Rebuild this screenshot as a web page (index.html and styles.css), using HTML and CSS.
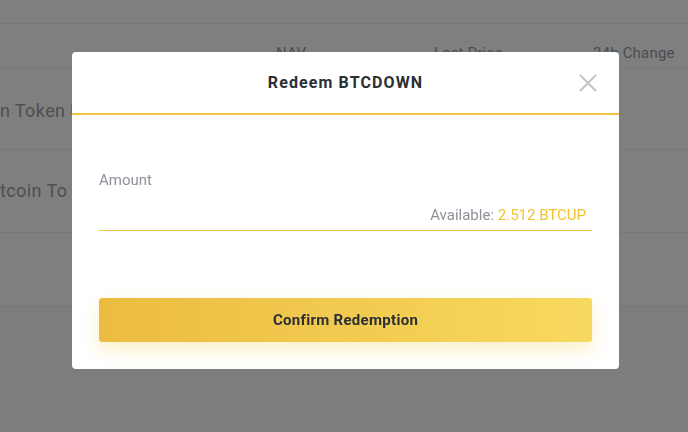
FILE: index.html
```html
<!DOCTYPE html>
<html lang="en">
<head>
    <meta charset="UTF-8">
    <meta name="viewport" content="width=device-width, initial-scale=1.0">
    <title>Redeem BTCDOWN</title>
    <link rel="stylesheet" href="styles.css">
</head>
<body>
    <div class="page">
        <div class="top-bar"></div>
        <div class="table-row table-head">
            <span class="cell name"></span>
            <span class="cell">NAV</span>
            <span class="cell">Last Price</span>
            <span class="cell">24h Change</span>
        </div>
        <div class="table-row token-row first">
            <span class="cell name">n Token U</span>
        </div>
        <div class="table-row token-row second">
            <span class="cell name">tcoin To</span>
        </div>
        <div class="table-row empty-row"></div>
        <div class="page-footer"></div>
    </div>

    <div class="overlay">
        <div class="modal">
            <div class="modal-header">
                <span></span>
                <h2 class="modal-title">Redeem BTCDOWN</h2>
                <button type="button" class="close-btn" aria-label="Close">
                    <svg width="18" height="18" viewBox="0 0 18 18">
                        <path d="M1 1L17 17M17 1L1 17" stroke="#c4c4c4" stroke-width="2" fill="none"/>
                    </svg>
                </button>
            </div>
            <div class="modal-body">
                <label class="field-label">Amount</label>
                <div class="amount-field">
                    <span class="available">Available: <span class="balance">2.512 BTCUP</span></span>
                </div>
                <button type="button" class="confirm-btn">Confirm Redemption</button>
            </div>
        </div>
    </div>
</body>
</html>
```

FILE: styles.css
```css
body {
    margin: 0;
    font-family: Roboto, "Liberation Sans", sans-serif;
    background-color: #ffffff;
    overflow: hidden;
}
.page {
    height: 432px;
    display: flex;
    flex-direction: column;
}
.top-bar {
    height: 23px;
    border-bottom: 1px solid #eeeff1;
}
.table-row {
    display: grid;
    grid-template-columns: 276px 158px 159px 1fr;
    border-bottom: 1px solid #eeeff1;
}
.table-head {
    padding: 19px 0 4px;
    font-size: 15px;
    line-height: 20px;
    color: #9499a3;
    letter-spacing: 0.2px;
}
.token-row {
    font-size: 18px;
    line-height: 24px;
    color: #9b9ea5;
    letter-spacing: 0.4px;
}
.token-row .name {
    white-space: nowrap;
}
.first {
    padding: 31px 0 26px;
}
.second {
    padding: 29px 0 29px;
}
.empty-row {
    height: 73px;
}
.page-footer {
    flex: 1;
    background: #fbfbfb;
}

.overlay {
    position: fixed;
    inset: 0;
    background: rgba(0, 0, 0, 0.5);
    display: flex;
    align-items: flex-start;
    padding: 52px 0 0 72px;
}
.modal {
    width: 547px;
    background: #ffffff;
    border-radius: 4px;
}
.modal-header {
    height: 61px;
    display: grid;
    grid-template-columns: 1fr auto 1fr;
    align-items: center;
    padding: 0 22px;
    border-bottom: 2px solid #f0c341;
}
.modal-title {
    margin: 0;
    font-size: 16px;
    font-weight: 700;
    color: #2b2f36;
    letter-spacing: 1.1px;
}
.close-btn {
    justify-self: end;
    background: none;
    border: none;
    padding: 0;
    width: 18px;
    height: 18px;
    cursor: pointer;
    display: flex;
}
.modal-body {
    padding: 55px 27px 27px;
    display: flex;
    flex-direction: column;
}
.field-label {
    font-size: 15px;
    line-height: 20px;
    color: #8e9199;
}
.amount-field {
    display: flex;
    justify-content: flex-end;
    padding: 15px 6px 5px 0;
    border-bottom: 1px solid #f3c440;
    font-size: 15px;
    line-height: 20px;
}
.available {
    color: #8e9199;
}
.balance {
    color: #f0b90b;
    opacity: 0.85;
}
.confirm-btn {
    margin-top: 67px;
    height: 44px;
    border: none;
    border-radius: 3px;
    background: linear-gradient(90deg, #ebbc40, #f8d95f);
    box-shadow: 0 8px 18px rgba(240, 185, 11, 0.22);
    font-family: inherit;
    font-size: 15px;
    font-weight: 700;
    color: #2b2f36;
    letter-spacing: 0.3px;
    cursor: pointer;
}
```
